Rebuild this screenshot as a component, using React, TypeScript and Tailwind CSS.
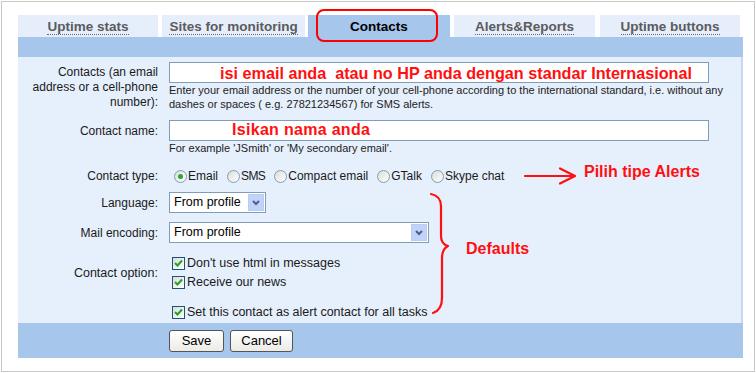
import React from "react";

const Radio = ({ checked }: { checked?: boolean }) => (
  <span className="inline-flex w-[13px] h-[13px] rounded-full border border-[#7f9db9] bg-gradient-to-br from-[#dcdcd6] to-white items-center justify-center mr-[1px]">
    {checked && <span className="w-[5px] h-[5px] rounded-full bg-[#2ea52b]" />}
  </span>
);

const Check = () => (
  <span className="inline-flex w-[13px] h-[13px] border border-[#1c5180] bg-gradient-to-br from-[#dcdcd6] to-white items-center justify-center mr-[2px] shrink-0">
    <svg width="9" height="9" viewBox="0 0 9 9">
      <path d="M1 4 L3.5 6.5 L8 1.5" stroke="#21a121" strokeWidth="2" fill="none" />
    </svg>
  </span>
);

const SelectBox = ({ w, text }: { w: string; text: string }) => (
  <div className={`${w} h-[21px] border border-[#7f9db9] bg-white flex items-center justify-between pl-[4px] pr-[1px]`}>
    <span className="text-[12.5px] text-black">{text}</span>
    <span className="w-[16px] h-[17px] bg-[#c1d3fb] border border-[#b8cbf0] flex items-center justify-center">
      <svg width="8" height="6" viewBox="0 0 8 6">
        <path d="M1 1 L4 4 L7 1" stroke="#4d6185" strokeWidth="2" fill="none" />
      </svg>
    </span>
  </div>
);

const Tab = ({ w, label, active }: { w: string; label: string; active?: boolean }) => (
  <div
    className={`${w} h-[22px] flex items-center justify-center pt-[2px] ${
      active ? "bg-[#a6c6ec] text-black" : "bg-[#e6eefb] text-[#5b5b5b]"
    } font-bold text-[13.5px]`}
  >
    <span className={active ? "" : "border-b border-dotted border-[#666] leading-[15px]"}>{label}</span>
  </div>
);

export default function App() {
  return (
    <div className="w-[756px] h-[373px] bg-white p-px" style={{ fontFamily: '"Liberation Sans", Arial, sans-serif' }}>
      <div className="relative w-full h-full border border-[#c8c8c8] pl-[16px] pt-[13px]">
        <div className="w-[725px]">
          <div className="flex h-[22px]">
            <Tab w="w-[140px]" label="Uptime stats" />
            <div className="w-[4px]" />
            <Tab w="w-[143px]" label="Sites for monitoring" />
            <div className="w-[3px]" />
            <Tab w="w-[142px]" label="Contacts" active />
            <div className="w-[4px]" />
            <Tab w="w-[141px]" label="Alerts&Reports" />
            <div className="w-[5px]" />
            <Tab w="w-[140px]" label="Uptime buttons" />
          </div>
          <div className="h-[20px] bg-[#a6c6ec]" />
          <div className="bg-[#e6effc] border-r-2 border-[#c9d8ee] h-[266px] text-[12px] text-[#1a1a1a]">
            {/* Row 1 */}
            <div className="flex pt-[5px]">
              <div className="w-[140px] text-right leading-[15px] pt-[3px]">
                Contacts (an email<br />address or a cell-phone<br />number):
              </div>
              <div className="ml-[11px] flex flex-col">
                <div className="w-[540px] h-[21px] border border-[#7f9db9] bg-white" />
                <div className="text-[11px] leading-[14px] text-[#222]">
                  Enter your email address or the number of your cell-phone according to the international standard, i.e. without any
                  <br />
                  dashes or spaces ( e.g. 27821234567) for SMS alerts.
                </div>
              </div>
            </div>
            {/* Row 2 */}
            <div className="flex mt-[9px]">
              <div className="w-[140px] text-right leading-[21px] pt-[1px]">Contact name:</div>
              <div className="ml-[11px] flex flex-col">
                <div className="w-[540px] h-[21px] border border-[#7f9db9] bg-white" />
                <div className="text-[11px] leading-[13px] mt-[1px] text-[#222]">
                  For example 'JSmith' or 'My secondary email'.
                </div>
              </div>
            </div>
            {/* Row 3 */}
            <div className="flex mt-[12px] h-[18px] items-center">
              <div className="w-[140px] text-right">Contact type:</div>
              <div className="ml-[16px] flex items-center gap-[9px] text-[12px]">
                <span className="flex items-center"><Radio checked />Email</span>
                <span className="flex items-center"><Radio /><span className="tracking-[-0.6px]">SMS</span></span>
                <span className="flex items-center"><Radio />Compact email</span>
                <span className="flex items-center"><Radio />GTalk</span>
                <span className="flex items-center"><Radio />Skype chat</span>
              </div>
            </div>
            {/* Row 4 */}
            <div className="flex mt-[7px] items-center">
              <div className="w-[140px] text-right">Language:</div>
              <div className="ml-[11px]"><SelectBox w="w-[97px]" text="From profile" /></div>
            </div>
            {/* Row 5 */}
            <div className="flex mt-[9px] items-center">
              <div className="w-[140px] text-right">Mail encoding:</div>
              <div className="ml-[11px]"><SelectBox w="w-[260px]" text="From profile" /></div>
            </div>
            {/* Row 6 */}
            <div className="flex mt-[13px] items-center">
              <div className="w-[140px] text-right text-[12.5px]">Contact option:</div>
              <div className="ml-[14px] flex flex-col gap-[4px] text-[12.5px]">
                <span className="flex items-center h-[15px]"><Check />Don't use html in messages</span>
                <span className="flex items-center h-[15px]"><Check />Receive our news</span>
              </div>
            </div>
            <div className="flex mt-[15px] text-[12.5px]">
              <div className="w-[140px]" />
              <div className="ml-[14px]">
                <span className="flex items-center h-[15px]"><Check />Set this contact as alert contact for all tasks</span>
              </div>
            </div>
          </div>
          <div className="h-[35px] bg-[#a6c6ec] flex items-center pl-[151px] gap-[6px]">
            <button className="w-[55px] h-[22px] rounded-[3px] border border-[#555] bg-gradient-to-b from-white to-[#ecebe6] text-[13px] text-black">Save</button>
            <button className="w-[63px] h-[22px] rounded-[3px] border border-[#555] bg-gradient-to-b from-white to-[#ecebe6] text-[13px] text-black">Cancel</button>
          </div>
        </div>

        {/* annotations */}
        <div className="absolute left-[314px] top-[7px] w-[122px] h-[33px] border-2 border-[#ff0000] rounded-[8px]" />
        <div className="absolute left-[218px] top-[61px] text-[16.2px] font-bold text-[#ff1010] whitespace-pre leading-[20px]">
          isi email anda  atau no HP anda dengan standar Internasional
        </div>
        <div className="absolute left-[230px] top-[118px] text-[16px] font-bold text-[#ff1010] leading-[20px] tracking-[0.3px]">
          Isikan nama anda
        </div>
        <div className="absolute left-[582px] top-[161px] text-[16px] font-bold text-[#ff1010] leading-[18px]">
          Pilih tipe Alerts
        </div>
        <div className="absolute left-[464px] top-[238px] text-[16px] font-bold text-[#ff1010] leading-[18px]">
          Defaults
        </div>
        <svg className="absolute left-[-2px] top-[-2px]" width="756" height="373" viewBox="0 0 756 373">
          <g stroke="#ff1010" strokeWidth="2.2" fill="none" strokeLinecap="round" strokeLinejoin="round">
            <path d="M525 176 L574 176 M560 168.5 L575 176 L560 183.5" />
            <path d="M431 194 Q441 196 441 206 L441 236 Q441 244 448 246 Q442 249 442 258 L442 298 Q442 310 433 313" />
          </g>
        </svg>
      </div>
    </div>
  );
}
